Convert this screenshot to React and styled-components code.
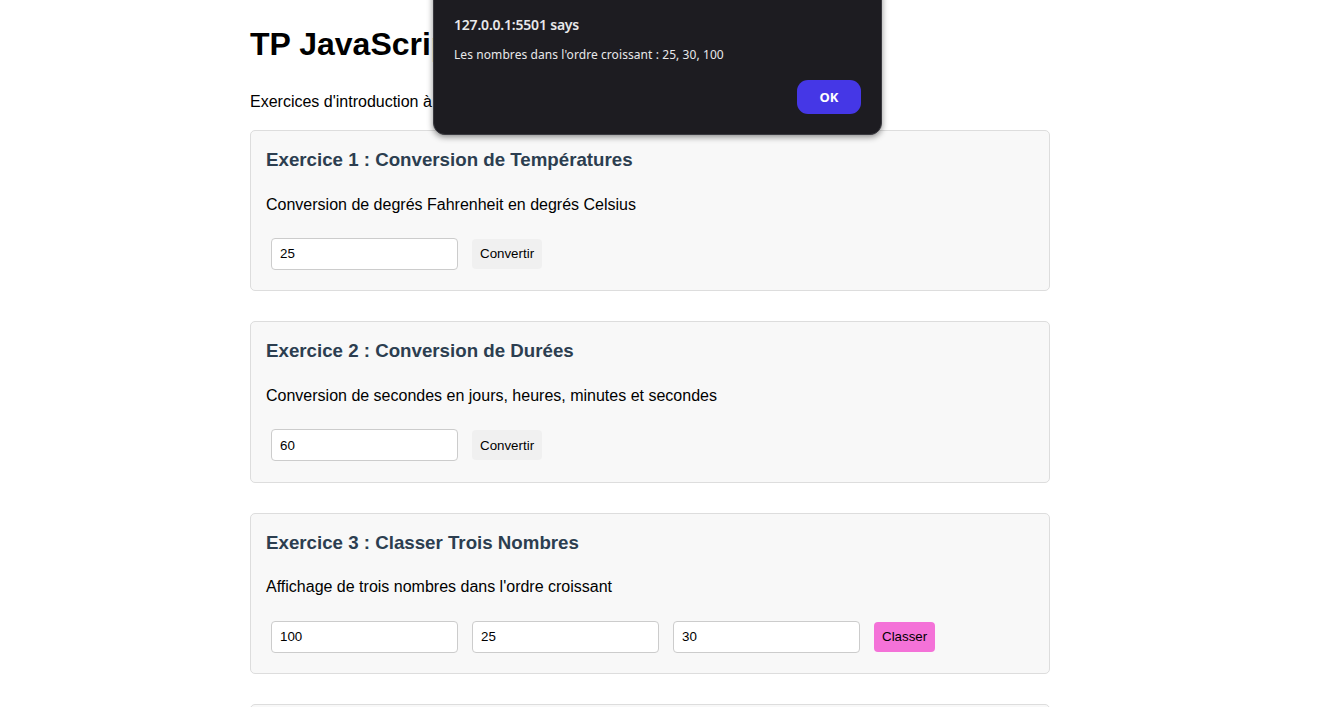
import React from "react";
import styled, { createGlobalStyle } from "styled-components";

const Global = createGlobalStyle`
  html, body { margin: 0; padding: 0; background: #fff; }
  body { font-family: "Liberation Sans", Arial, sans-serif; color: #000; overflow: hidden; }
`;

const Page = styled.div`
  width: 800px;
  margin-left: 250px;
  padding-top: 1px;
`;

const Title = styled.h1`
  font-size: 32px;
  font-weight: bold;
  margin: 25px 0 30px;
`;

const Intro = styled.p`
  font-size: 16px;
  margin: 0 0 19px;
`;

const Card = styled.section`
  background: #f8f8f8;
  border: 1px solid #ddd;
  border-radius: 5px;
  padding: 1px 15px 15.5px;
  margin-bottom: 30px;
`;

const CardTitle = styled.h3`
  color: #2c3e50;
  font-size: 18.72px;
  font-weight: bold;
  line-height: 21.5px;
  margin: 17px 0 25px;
`;

const CardText = styled.p`
  font-size: 16px;
  line-height: 18.4px;
  margin: 0 0 19px;
`;

const Row = styled.div`
  display: flex;
  align-items: center;
  gap: 4px;
`;

const Input = styled.input`
  box-sizing: border-box;
  width: 187px;
  height: 32px;
  margin: 5px;
  padding: 8px;
  border: 1px solid #ccc;
  border-radius: 4px;
  background: #fff;
  font-family: "Liberation Sans", Arial, sans-serif;
  font-size: 13.33px;
  color: #000;
`;

const Button = styled.button`
  height: 30px;
  margin: 5px;
  padding: 0 8px;
  border: none;
  border-radius: 4px;
  background: ${(p) => (p.$pink ? "#f472d8" : "#f0f0f0")};
  font-family: "Liberation Sans", Arial, sans-serif;
  font-size: 13.33px;
  color: #000;
`;

const Dialog = styled.div`
  position: absolute;
  left: 433px;
  top: -20px;
  width: 449px;
  height: 155px;
  box-sizing: border-box;
  background: #1d1c21;
  border-radius: 12px;
  box-shadow: 0 2px 6px rgba(0, 0, 0, 0.45);
  border: 1px solid #3a3a40;
  padding: 34px 20px 0 20px;
  font-family: "Noto Sans", "Open Sans", sans-serif;
  color: #e8e8ea;
`;

const DialogTitle = styled.div`
  font-size: 14px;
  font-weight: 600;
  letter-spacing: -0.2px;
  line-height: 20px;
`;

const DialogMsg = styled.div`
  margin-top: 12px;
  font-size: 12px;
  letter-spacing: 0.08px;
  line-height: 16px;
`;

const DialogActions = styled.div`
  display: flex;
  justify-content: flex-end;
  margin-top: 17px;
`;

const OkButton = styled.button`
  width: 64px;
  height: 34px;
  border: none;
  border-radius: 11px;
  background: #4537e6;
  color: #fff;
  font-family: "Noto Sans", sans-serif;
  font-weight: bold;
  font-size: 13px;
`;

const exercises = [
  {
    title: "Exercice 1 : Conversion de Températures",
    text: "Conversion de degrés Fahrenheit en degrés Celsius",
    inputs: ["25"],
    button: "Convertir",
  },
  {
    title: "Exercice 2 : Conversion de Durées",
    text: "Conversion de secondes en jours, heures, minutes et secondes",
    inputs: ["60"],
    button: "Convertir",
  },
  {
    title: "Exercice 3 : Classer Trois Nombres",
    text: "Affichage de trois nombres dans l'ordre croissant",
    inputs: ["100", "25", "30"],
    button: "Classer",
    pink: true,
  },
  {
    title: "Exercice 4 : Calcul",
    text: "Calcul",
    inputs: [""],
    button: "Calculer",
  },
];

export default function App() {
  return (
    <>
      <Global />
      <Page>
        <Title>TP JavaScript</Title>
        <Intro>Exercices d'introduction à JavaScript</Intro>
        {exercises.map((ex, i) => (
          <Card key={i}>
            <CardTitle>{ex.title}</CardTitle>
            <CardText>{ex.text}</CardText>
            <Row>
              {ex.inputs.map((v, j) => (
                <Input key={j} defaultValue={v} />
              ))}
              <Button $pink={ex.pink}>{ex.button}</Button>
            </Row>
          </Card>
        ))}
      </Page>
      <Dialog>
        <DialogTitle>127.0.0.1:5501 says</DialogTitle>
        <DialogMsg>Les nombres dans l'ordre croissant : 25, 30, 100</DialogMsg>
        <DialogActions>
          <OkButton>OK</OkButton>
        </DialogActions>
      </Dialog>
    </>
  );
}
